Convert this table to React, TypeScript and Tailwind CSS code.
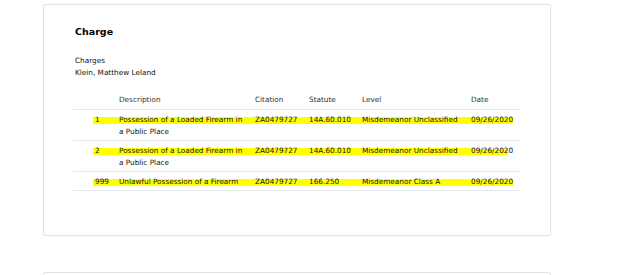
const hl =
  "bg-[linear-gradient(to_bottom,transparent_3px,#ffff00_3px,#ffff00_10px,transparent_10px)]";

type Charge = {
  no: string;
  desc: string;
  desc2?: string;
  citation: string;
  statute: string;
  level: string;
  date: string;
  dateTail?: string;
};

const charges: Charge[] = [
  {
    no: "1",
    desc: "Possession of a Loaded Firearm in",
    desc2: "a Public Place",
    citation: "ZA0479727",
    statute: "14A.60.010",
    level: "Misdemeanor Unclassified",
    date: "09/26/2020",
  },
  {
    no: "2",
    desc: "Possession of a Loaded Firearm in",
    desc2: "a Public Place",
    citation: "ZA0479727",
    statute: "14A.60.010",
    level: "Misdemeanor Unclassified",
    date: "09/26/202",
    dateTail: "0",
  },
  {
    no: "999",
    desc: "Unlawful Possession of a Firearm",
    citation: "ZA0479727",
    statute: "166.250",
    level: "Misdemeanor Class A",
    date: "09/26/2020",
  },
];

const cols = "grid grid-cols-[20px_26px_136px_54px_53px_109px_1fr]";

function Row({ c }: { c: Charge }) {
  return (
    <div className={`${cols} border-t border-[#e8e8e8] pt-[4px] pb-[2px] leading-[12px] whitespace-nowrap`}>
      <div />
      <div className={`${hl} pl-[2px] self-start`}>{c.no}</div>
      <div>
        <div className={hl}>{c.desc}</div>
        {c.desc2 && <div>{c.desc2}</div>}
      </div>
      <div className={`${hl} self-start`}>{c.citation}</div>
      <div className={`${hl} self-start`}>{c.statute}</div>
      <div className={`${hl} self-start`}>{c.level}</div>
      <div className="self-start">
        <span className={hl}>{c.date}</span>
        {c.dateTail}
      </div>
    </div>
  );
}

export default function App() {
  return (
    <div className="h-screen overflow-hidden bg-white font-['DejaVu_Sans',Verdana,sans-serif] text-[#111]">
      <div className="pt-[4px]">
        {/* Charge card */}
        <section className="ml-[43px] w-[508px] h-[232px] border border-[#e2e2e2] rounded-[3px] shadow-[0_0_2px_rgba(0,0,0,0.06)] bg-white">
          <div className="pt-[21px] pl-[31px] pr-[30px]">
            <h2 className="text-[9.5px] leading-[12px] font-bold text-black">Charge</h2>
            <div className="mt-[17px] text-[7.3px] leading-[12px]">
              <p>Charges</p>
              <p>Klein, Matthew Leland</p>
            </div>
          </div>

          <div className="mt-[15px] ml-[29px] w-[447px] text-[7.3px]">
            <div className={`${cols} leading-[12px] pb-[3px] text-[#333]`}>
              <div />
              <div />
              <div>Description</div>
              <div>Citation</div>
              <div>Statute</div>
              <div>Level</div>
              <div>Date</div>
            </div>
            {charges.map((c) => (
              <Row key={c.no} c={c} />
            ))}
            <div className="border-t border-[#e8e8e8]" />
          </div>
        </section>

        {/* next card */}
        <section className="mt-[36px] ml-[43px] w-[508px] h-[40px] border border-[#e2e2e2] rounded-[3px] shadow-[0_0_2px_rgba(0,0,0,0.06)] bg-white" />
      </div>
    </div>
  );
}
